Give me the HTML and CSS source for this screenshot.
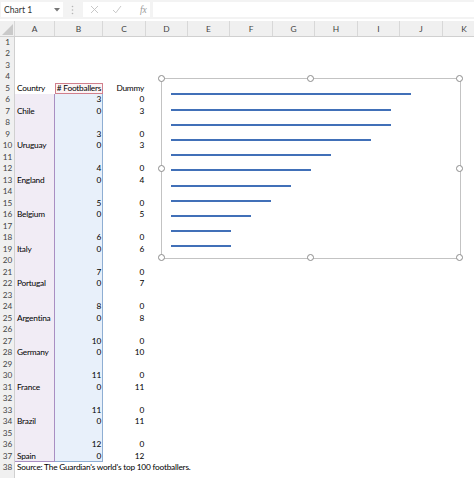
FILE: index.html
```html
<!DOCTYPE html>
<html>
<head>
<meta charset="utf-8">
<link rel="stylesheet" href="styles.css">
</head>
<body>
<div class="app">
  <div class="fbar">
    <div class="namebox"><span>Chart 1</span>
      <svg class="caret" width="6" height="4" viewBox="0 0 6 4"><path d="M0 0H6L3 3.5Z" fill="#777"/></svg>
    </div>
    <svg class="dots" width="3" height="10" viewBox="0 0 3 10"><circle cx="1.5" cy="1.5" r="0.8" fill="#b5b5b5"/><circle cx="1.5" cy="5" r="0.8" fill="#b5b5b5"/><circle cx="1.5" cy="8.5" r="0.8" fill="#b5b5b5"/></svg>
    <div class="tools">
      <svg width="9" height="9" viewBox="0 0 9 9"><path d="M1 1L8 8M8 1L1 8" stroke="#c2c2c2" stroke-width="0.9"/></svg>
      <svg width="10" height="9" viewBox="0 0 10 9"><path d="M1 5L3.8 7.8L9 1" stroke="#c2c2c2" stroke-width="0.9" fill="none"/></svg>
      <span class="fx">fx</span>
    </div>
    <div class="finput"></div>
  </div>
  <div class="gap"></div>
  <div class="colhead">
    <div class="corner"><svg width="11" height="11" viewBox="0 0 11 11"><path d="M11 0V11H0Z" fill="#c9c9c9"/></svg></div>
    <div>A</div><div>B</div><div>C</div><div>D</div><div>E</div><div>F</div><div>G</div><div>H</div><div>I</div><div>J</div><div>K</div>
  </div>
  <div class="sheet">
    <div class="row"><div class="rh">1</div><div class="a"></div><div class="b"></div><div class="c"></div></div>
    <div class="row"><div class="rh">2</div><div class="a"></div><div class="b"></div><div class="c"></div></div>
    <div class="row"><div class="rh">3</div><div class="a"></div><div class="b"></div><div class="c"></div></div>
    <div class="row"><div class="rh">4</div><div class="a"></div><div class="b"></div><div class="c"></div></div>
    <div class="row"><div class="rh">5</div><div class="a">Country</div><div class="b name">#&nbsp;Footballers</div><div class="c">Dummy</div></div>
    <div class="row"><div class="rh">6</div><div class="a ha top"></div><div class="b hb">3</div><div class="c">0</div></div>
    <div class="row"><div class="rh">7</div><div class="a ha">Chile</div><div class="b hb">0</div><div class="c">3</div></div>
    <div class="row"><div class="rh">8</div><div class="a ha"></div><div class="b hb"></div><div class="c"></div></div>
    <div class="row"><div class="rh">9</div><div class="a ha"></div><div class="b hb">3</div><div class="c">0</div></div>
    <div class="row"><div class="rh">10</div><div class="a ha">Uruguay</div><div class="b hb">0</div><div class="c">3</div></div>
    <div class="row"><div class="rh">11</div><div class="a ha"></div><div class="b hb"></div><div class="c"></div></div>
    <div class="row"><div class="rh">12</div><div class="a ha"></div><div class="b hb">4</div><div class="c">0</div></div>
    <div class="row"><div class="rh">13</div><div class="a ha">England</div><div class="b hb">0</div><div class="c">4</div></div>
    <div class="row"><div class="rh">14</div><div class="a ha"></div><div class="b hb"></div><div class="c"></div></div>
    <div class="row"><div class="rh">15</div><div class="a ha"></div><div class="b hb">5</div><div class="c">0</div></div>
    <div class="row"><div class="rh">16</div><div class="a ha">Belgium</div><div class="b hb">0</div><div class="c">5</div></div>
    <div class="row"><div class="rh">17</div><div class="a ha"></div><div class="b hb"></div><div class="c"></div></div>
    <div class="row"><div class="rh">18</div><div class="a ha"></div><div class="b hb">6</div><div class="c">0</div></div>
    <div class="row"><div class="rh">19</div><div class="a ha">Italy</div><div class="b hb">0</div><div class="c">6</div></div>
    <div class="row"><div class="rh">20</div><div class="a ha"></div><div class="b hb"></div><div class="c"></div></div>
    <div class="row"><div class="rh">21</div><div class="a ha"></div><div class="b hb">7</div><div class="c">0</div></div>
    <div class="row"><div class="rh">22</div><div class="a ha">Portugal</div><div class="b hb">0</div><div class="c">7</div></div>
    <div class="row"><div class="rh">23</div><div class="a ha"></div><div class="b hb"></div><div class="c"></div></div>
    <div class="row"><div class="rh">24</div><div class="a ha"></div><div class="b hb">8</div><div class="c">0</div></div>
    <div class="row"><div class="rh">25</div><div class="a ha">Argentina</div><div class="b hb">0</div><div class="c">8</div></div>
    <div class="row"><div class="rh">26</div><div class="a ha"></div><div class="b hb"></div><div class="c"></div></div>
    <div class="row"><div class="rh">27</div><div class="a ha"></div><div class="b hb">10</div><div class="c">0</div></div>
    <div class="row"><div class="rh">28</div><div class="a ha">Germany</div><div class="b hb">0</div><div class="c">10</div></div>
    <div class="row"><div class="rh">29</div><div class="a ha"></div><div class="b hb"></div><div class="c"></div></div>
    <div class="row"><div class="rh">30</div><div class="a ha"></div><div class="b hb">11</div><div class="c">0</div></div>
    <div class="row"><div class="rh">31</div><div class="a ha">France</div><div class="b hb">0</div><div class="c">11</div></div>
    <div class="row"><div class="rh">32</div><div class="a ha"></div><div class="b hb"></div><div class="c"></div></div>
    <div class="row"><div class="rh">33</div><div class="a ha"></div><div class="b hb">11</div><div class="c">0</div></div>
    <div class="row"><div class="rh">34</div><div class="a ha">Brazil</div><div class="b hb">0</div><div class="c">11</div></div>
    <div class="row"><div class="rh">35</div><div class="a ha"></div><div class="b hb"></div><div class="c"></div></div>
    <div class="row"><div class="rh">36</div><div class="a ha"></div><div class="b hb">12</div><div class="c">0</div></div>
    <div class="row"><div class="rh">37</div><div class="a ha bot">Spain</div><div class="b hb bot">0</div><div class="c">12</div></div>
    <div class="row"><div class="rh">38</div><div class="a src">Source: The Guardian's world's top 100 footballers.</div><div class="b"></div><div class="c"></div></div>
    <div class="row"><div class="rh"></div><div class="a"></div><div class="b"></div><div class="c"></div></div>
  </div>

  <div class="chart">
    <div class="plot">
      <div class="bar" style="width:240px"></div>
      <div class="bar" style="width:220px"></div>
      <div class="bar" style="width:220px"></div>
      <div class="bar" style="width:200px"></div>
      <div class="bar" style="width:160px"></div>
      <div class="bar" style="width:140px"></div>
      <div class="bar" style="width:120px"></div>
      <div class="bar" style="width:100px"></div>
      <div class="bar" style="width:80px"></div>
      <div class="bar" style="width:60px"></div>
      <div class="bar" style="width:60px"></div>
    </div>
    <span class="h h-tl"></span><span class="h h-tc"></span><span class="h h-tr"></span>
    <span class="h h-ml"></span><span class="h h-mr"></span>
    <span class="h h-bl"></span><span class="h h-bc"></span><span class="h h-br"></span>
  </div>
</div>
</body>
</html>
```
FILE: styles.css
```css
html, body {
  margin: 0;
  padding: 0;
  background: #fff;
  overflow: hidden;
}
.app {
  position: relative;
  width: 474px;
  height: 478px;
  overflow: hidden;
  font-family: Lato, "Liberation Sans", sans-serif;
  font-size: 8.3px;
  letter-spacing: -0.22px;
  color: #000;
}
.fbar {
  height: 19px;
  background: #f3f3f3;
  display: flex;
  align-items: center;
}
.namebox {
  width: 62px;
  height: 15px;
  margin-left: 1px;
  background: #fff;
  box-sizing: border-box;
  display: flex;
  align-items: center;
  justify-content: space-between;
  padding: 0 3px 0 3px;
  font-size: 8.6px;
  letter-spacing: 0;
  color: #333;
}
.caret { margin-top: 1px; }
.dots { margin-left: 8px; }
.tools {
  margin-left: 9px;
  width: 67px;
  height: 15px;
  background: #fff;
  display: flex;
  align-items: center;
  padding-left: 7px;
  box-sizing: border-box;
  gap: 13px;
}
.fx {
  font-family: "Liberation Serif", serif;
  font-style: italic;
  font-size: 9.5px;
  color: #9a9a9a;
  margin-left: 5px;
}
.finput {
  flex: 1;
  height: 15px;
  margin-left: 3px;
  background: #fff;
}
.gap { height: 2px; }
.colhead {
  display: grid;
  grid-template-columns: 15px 40px 48px 43px 42px 42px 43px 42px 43px 42px 43px 43px;
  height: 15.5px;
  background: #f0f0f0;
  border-bottom: 1px solid #d0d0d0;
  box-sizing: border-box;
  width: 486px;
}
.colhead > div {
  display: flex;
  align-items: center;
  justify-content: center;
  color: #444;
  font-size: 8.4px;
  letter-spacing: 0;
  border-right: 1px solid #d8d8d8;
  padding-top: 1px;
}
.colhead > .corner {
  justify-content: flex-end;
  align-items: flex-end;
  padding: 0 1px 1px 0;
  box-sizing: border-box;
}
.sheet { display: flex; flex-direction: column; }
.row {
  display: grid;
  grid-template-columns: 15px 40px 48px 43px;
  height: 11.5px;
  line-height: 11.5px;
}
.rh {
  background: #f0f0f0;
  color: #444;
  text-align: center;
  font-size: 8.2px;
  letter-spacing: 0;
  box-shadow: inset -1px 0 #d0d0d0;
}
.a {
  padding-left: 2px;
  white-space: nowrap;
  overflow: visible;
}
.b, .c {
  text-align: right;
  padding-right: 2px;
  white-space: nowrap;
}
.name {
  background: #fcf4f5;
  box-shadow: inset 1px 0 #d17f8c, inset -1px 0 #d17f8c, inset 0 1px #d17f8c, inset 0 -1px #d17f8c;
  text-align: center;
  padding: 0;
}
.ha {
  background: #f1ecf5;
  box-shadow: inset -1px 0 #a98fc2;
}
.ha.bot { box-shadow: inset -1px 0 #a98fc2, inset 0 -1px #a98fc2; }
.hb {
  background: #e8f0fa;
  box-shadow: inset -1px 0 #8eaed3;
}
.hb.bot { box-shadow: inset -1px 0 #8eaed3, inset 0 -1px #8eaed3; }
.src { position: relative; z-index: 1; }

.chart {
  position: absolute;
  left: 161px;
  top: 78px;
  width: 300px;
  height: 181px;
  border: 1px solid #c3c3c3;
  box-sizing: border-box;
  background: #fff;
}
.plot {
  display: flex;
  flex-direction: column;
  gap: 13.2px;
  padding: 14.4px 0 0 9px;
}
.bar {
  height: 2px;
  background: #4170b8;
}
.h {
  position: absolute;
  width: 7px;
  height: 7px;
  border-radius: 50%;
  border: 1px solid #8c8c8c;
  background: #fff;
  box-sizing: border-box;
  margin: -4px 0 0 -4px;
}
.h-tl { left: 0; top: 0; }
.h-tc { left: 50%; top: 0; }
.h-tr { left: 100%; top: 0; }
.h-ml { left: 0; top: 50%; }
.h-mr { left: 100%; top: 50%; }
.h-bl { left: 0; top: 100%; }
.h-bc { left: 50%; top: 100%; }
.h-br { left: 100%; top: 100%; }
```
